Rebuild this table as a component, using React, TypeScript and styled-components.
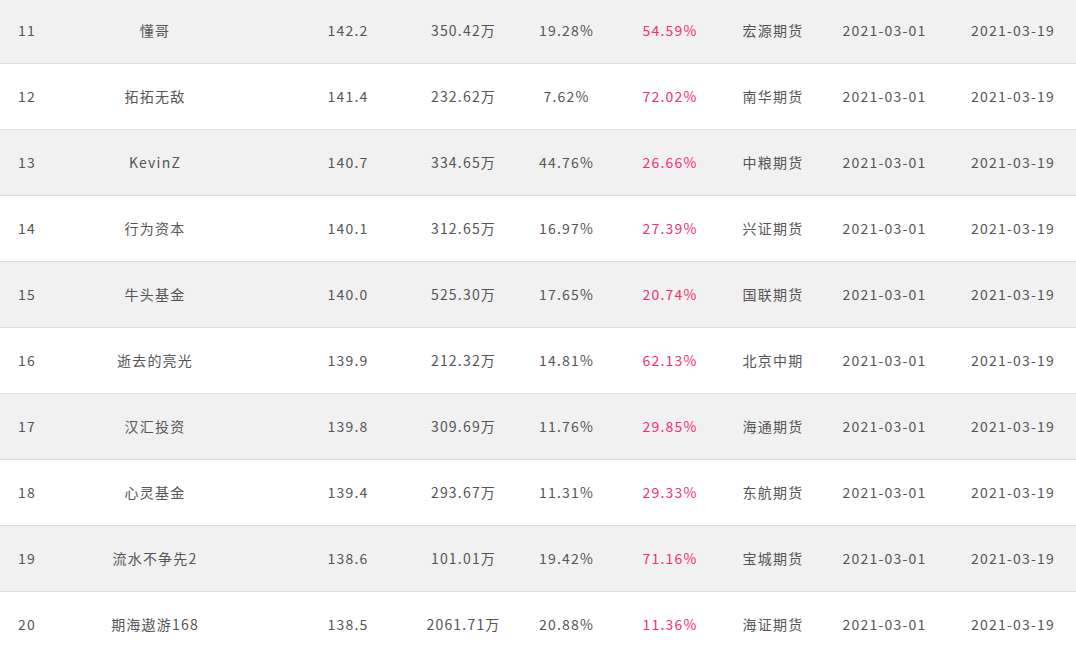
import React from "react";
import styled, { createGlobalStyle } from "styled-components";

const GlobalStyle = createGlobalStyle`
  html, body {
    margin: 0;
    padding: 0;
    background: #ffffff;
    overflow: hidden;
  }
  body {
    font-family: "Noto Sans CJK SC", "Noto Sans", sans-serif;
  }
`;

type Align = "left" | "center";

interface Col {
  width: number;
  align: Align;
  padL: number;
  padR: number;
  accent?: boolean;
}

const columns: Col[] = [
  { width: 90, align: "left", padL: 18, padR: 0 },
  { width: 161, align: "center", padL: 0, padR: 31 },
  { width: 154, align: "center", padL: 40, padR: 0 },
  { width: 110, align: "center", padL: 7, padR: 0 },
  { width: 103, align: "center", padL: 0, padR: 0 },
  { width: 103, align: "center", padL: 1, padR: 0, accent: true },
  { width: 108, align: "center", padL: 0, padR: 4 },
  { width: 120, align: "center", padL: 0, padR: 9 },
  { width: 127, align: "center", padL: 1, padR: 0 },
];

const rows: string[][] = [
  ["11", "懂哥", "142.2", "350.42万", "19.28%", "54.59%", "宏源期货", "2021-03-01", "2021-03-19"],
  ["12", "拓拓无敌", "141.4", "232.62万", "7.62%", "72.02%", "南华期货", "2021-03-01", "2021-03-19"],
  ["13", "KevinZ", "140.7", "334.65万", "44.76%", "26.66%", "中粮期货", "2021-03-01", "2021-03-19"],
  ["14", "行为资本", "140.1", "312.65万", "16.97%", "27.39%", "兴证期货", "2021-03-01", "2021-03-19"],
  ["15", "牛头基金", "140.0", "525.30万", "17.65%", "20.74%", "国联期货", "2021-03-01", "2021-03-19"],
  ["16", "逝去的亮光", "139.9", "212.32万", "14.81%", "62.13%", "北京中期", "2021-03-01", "2021-03-19"],
  ["17", "汉汇投资", "139.8", "309.69万", "11.76%", "29.85%", "海通期货", "2021-03-01", "2021-03-19"],
  ["18", "心灵基金", "139.4", "293.67万", "11.31%", "29.33%", "东航期货", "2021-03-01", "2021-03-19"],
  ["19", "流水不争先2", "138.6", "101.01万", "19.42%", "71.16%", "宝城期货", "2021-03-01", "2021-03-19"],
  ["20", "期海遨游168", "138.5", "2061.71万", "20.88%", "11.36%", "海证期货", "2021-03-01", "2021-03-19"],
];

const Table = styled.div`
  display: flex;
  flex-direction: column;
  width: 1076px;
  margin-top: -2px;
`;

const Row = styled.div<{ $shaded: boolean }>`
  display: grid;
  grid-template-columns: ${columns.map((c) => `${c.width}px`).join(" ")};
  height: 65px;
  align-items: center;
  background: ${(p) => (p.$shaded ? "#f1f1f1" : "#ffffff")};
  border-bottom: 1px solid #dedede;
`;

const Cell = styled.div<{ $align: Align; $padL: number; $padR: number; $accent?: boolean }>`
  text-align: ${(p) => p.$align};
  padding-left: ${(p) => p.$padL}px;
  padding-right: ${(p) => p.$padR}px;
  padding-bottom: 2px;
  font-size: 14px;
  letter-spacing: 1.2px;
  line-height: 20px;
  white-space: nowrap;
  color: ${(p) => (p.$accent ? "#f4306e" : "#555555")};
`;

export default function App() {
  return (
    <>
      <GlobalStyle />
      <Table>
        {rows.map((r, i) => (
          <Row key={r[0]} $shaded={i % 2 === 0}>
            {r.map((v, j) => {
              const c = columns[j];
              return (
                <Cell key={j} $align={c.align} $padL={c.padL} $padR={c.padR} $accent={c.accent}>
                  {v}
                </Cell>
              );
            })}
          </Row>
        ))}
      </Table>
    </>
  );
}
